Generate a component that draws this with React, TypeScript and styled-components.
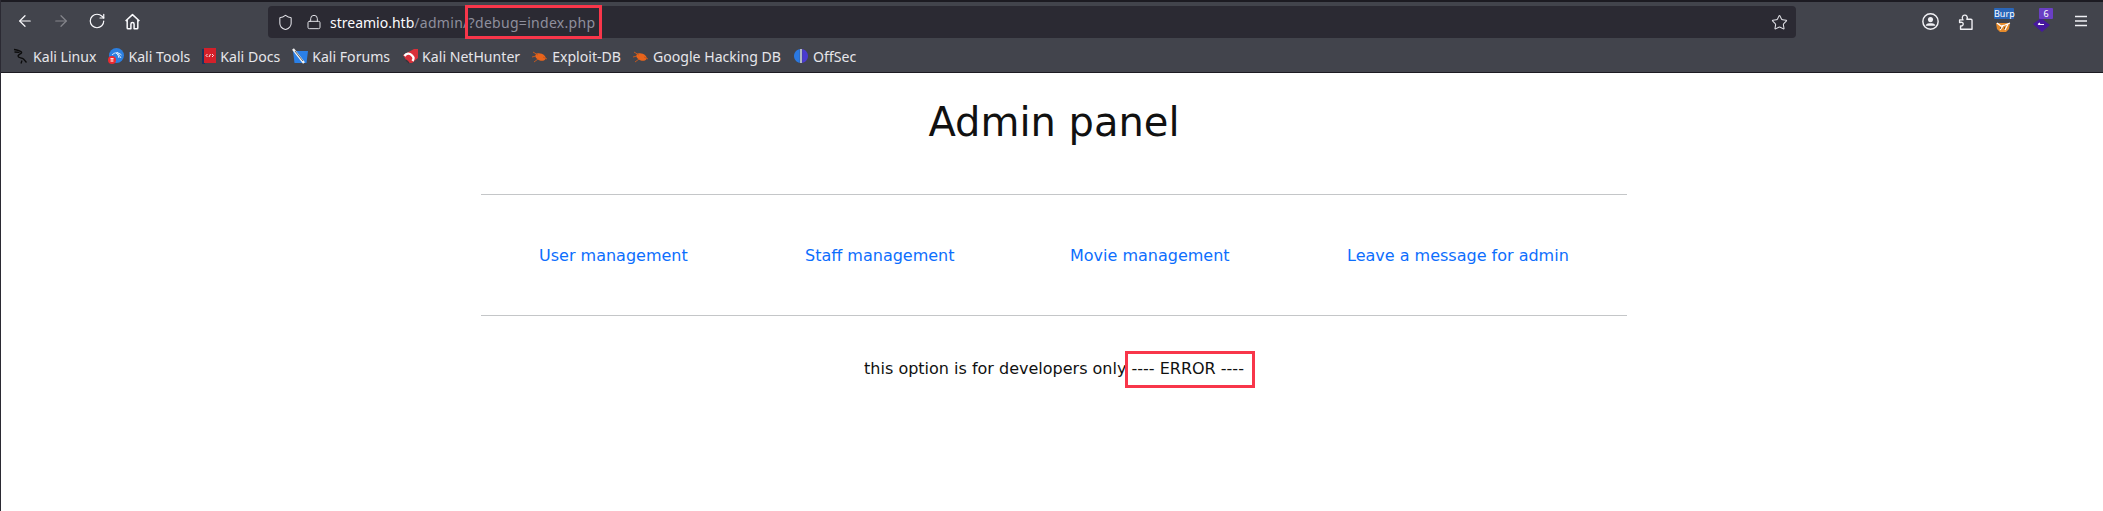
import React from 'react';
import styled, { createGlobalStyle } from 'styled-components';
import { ArrowLeft, ArrowRight, RotateCw, Shield, Lock, Star } from 'lucide-react';

const GlobalStyle = createGlobalStyle`
  html, body {
    margin: 0;
    padding: 0;
    background: #ffffff;
    overflow: hidden;
  }
`;

const Window = styled.div`
  width: 2103px;
  height: 511px;
  display: flex;
  flex-direction: column;
  border-left: 1px solid #2b2a33;
  box-sizing: border-box;
`;

const TopStrip = styled.div`
  height: 2px;
  background: #1c1b22;
  flex: none;
`;

const NavBar = styled.div`
  height: 38px;
  background: #42444c;
  display: flex;
  align-items: center;
  padding-left: 15px;
  flex: none;
`;

const NavButtons = styled.div`
  display: flex;
  align-items: center;
  gap: 18px;
  width: 252px;
  color: #fbfbfe;
`;

const UrlBar = styled.div`
  position: relative;
  width: 1528px;
  height: 32px;
  background: #2b2a33;
  border-radius: 4px;
  display: flex;
  align-items: center;
  padding: 0 8px 0 9px;
  box-sizing: border-box;
  color: #e0e0e6;
  margin-top: 2px;
`;

const LockSlot = styled.div`
  display: flex;
  margin-left: 12px;
`;

const UrlText = styled.span`
  font-family: 'Noto Sans', sans-serif;
  font-size: 14px;
  color: #fbfbfe;
  margin-left: 8px;
  white-space: nowrap;
`;

const UrlMuted = styled.span`
  color: #8f8f9d;
  letter-spacing: 0.3px;
`;

const StarSlot = styled.div`
  margin-left: auto;
  display: flex;
  color: #e0e0e6;
`;

const Highlight = styled.div<{ $l: number; $t: number; $w: number; $h: number }>`
  position: absolute;
  left: ${(p) => p.$l}px;
  top: ${(p) => p.$t}px;
  width: ${(p) => p.$w}px;
  height: ${(p) => p.$h}px;
  border: 3px solid #f8364a;
  box-sizing: border-box;
`;

const RightTools = styled.div`
  display: flex;
  align-items: center;
  margin-left: 126px;
  gap: 19px;
  color: #f0f0f4;
`;

const Badge = styled.div`
  position: relative;
  width: 20px;
  height: 24px;
`;

const BadgeLabel = styled.div<{ $bg: string; $w: number }>`
  position: absolute;
  top: -1px;
  right: 0;
  width: ${(p) => p.$w}px;
  height: 11px;
  background: ${(p) => p.$bg};
  border-radius: 1px;
  color: #ffffff;
  font-family: 'Noto Sans', sans-serif;
  font-size: 9px;
  line-height: 11px;
  text-align: center;
  white-space: nowrap;
`;

const BookmarksBar = styled.div`
  height: 33px;
  background: #42444c;
  border-bottom: 1px solid #1c1b22;
  display: flex;
  align-items: center;
  padding-left: 12px;
  gap: 12px;
  flex: none;
  box-sizing: border-box;
`;

const Bookmark = styled.div`
  display: flex;
  align-items: center;
  gap: 4px;
  color: #e6e6ea;
  font-family: 'Noto Sans', sans-serif;
  font-size: 14.1px;
  white-space: nowrap;
`;

const Page = styled.main`
  flex: 1;
  background: #ffffff;
  display: flex;
  flex-direction: column;
  align-items: center;
  padding-left: 4px;
  font-family: 'DejaVu Sans', sans-serif;
  color: #212529;
`;

const Title = styled.h1`
  margin: 25px 0 0;
  font-size: 40px;
  font-weight: 400;
  line-height: 48px;
  color: #111111;
`;

const Rule = styled.hr<{ $top: number }>`
  width: 1146px;
  margin: ${(p) => p.$top}px 0 0;
  border: 0;
  border-top: 1px solid #c4c6c8;
`;

const LinkRow = styled.nav`
  width: 1146px;
  display: flex;
  margin-top: 49px;
`;

const NavLink = styled.a<{ $w: number }>`
  width: ${(p) => p.$w}px;
  padding-left: 58px;
  box-sizing: border-box;
  color: #0d6efd;
  font-size: 16px;
  line-height: 24px;
  text-decoration: none;
  white-space: nowrap;
`;

const Message = styled.div`
  position: relative;
  margin-top: 41px;
  font-size: 16px;
  line-height: 24px;
  color: #111111;
  white-space: nowrap;
`;

const navIcon = { size: 18, strokeWidth: 1.6 };

function HomeIcon() {
  return (
    <svg width="17" height="17" viewBox="0 0 16 16" fill="none" stroke="currentColor" strokeWidth="1.4" strokeLinejoin="round">
      <path d="M1.5 7.6L8 1.5l6.5 6.1M3 6.4V14a.8.8 0 0 0 .8.8h2.7v-4.3a1.5 1.5 0 0 1 3 0v4.3h2.7a.8.8 0 0 0 .8-.8V6.4" />
    </svg>
  );
}

function AccountIcon() {
  return (
    <svg width="17" height="17" viewBox="0 0 16 16" fill="none">
      <circle cx="8" cy="8" r="7.2" stroke="#f0f0f4" strokeWidth="1.4" />
      <circle cx="8" cy="6.2" r="2.4" fill="#f0f0f4" />
      <path d="M3.6 11.2c1-1.1 2.6-1.5 4.4-1.5s3.4.4 4.4 1.5v.8H3.6z" fill="#f0f0f4" />
    </svg>
  );
}

function ExtensionIcon() {
  return (
    <svg width="17" height="17" viewBox="0 0 16 16" fill="none" stroke="#f0f0f4" strokeWidth="1.3" strokeLinejoin="round">
      <path d="M1.5 6.5h3.2c-.9-1-1-2-.4-3.2.6-1.4 3-1.8 4-.4.6.9.6 2 0 3h3.900a1 1 0 0 1 1 1v8.400H2.400v-3.200c1.300.3 2.500-.3 2.500-1.800S3 8.300 1.500 9z" />
    </svg>
  );
}

function MenuIcon() {
  return (
    <svg width="18" height="18" viewBox="0 0 18 18" stroke="#f0f0f4" strokeWidth="1.4">
      <path d="M3 4.500h12M3 9h12M3 13.500h12" />
    </svg>
  );
}

function Favicon({ name }: { name: string }) {
  switch (name) {
    case 'linux':
      return (
        <svg width="16" height="16" viewBox="0 0 16 16" fill="none" stroke="#0c0c0c" strokeWidth="1.3">
          <path d="M1 1.500c3 .5 6 1 7.500 2.500 1 1.500-3 2-3.500 4 0 2 3.500 1.500 5.500 3l3 3.500" />
          <path d="M1.500 4c2 0 3.500 0 5 .5M9 12.500l-1 3" />
        </svg>
      );
    case 'tools':
      return (
        <svg width="16" height="16" viewBox="0 0 16 16">
          <circle cx="8.500" cy="7.500" r="7.500" fill="#2b7fe0" />
          <path d="M4 7c3-3 6-3 9.500 0M8 5l2 2 1 3M9 4l4 6" stroke="#e8f0fc" fill="none" strokeWidth="0.9" />
          <circle cx="4" cy="12" r="4" fill="#ec2a30" />
          <path d="M2.500 10.500h3M3.200 10.500v3.500M4.800 10.500v3.500" stroke="#ffffff" strokeWidth="0.8" />
        </svg>
      );
    case 'docs':
      return (
        <svg width="14" height="16" viewBox="0 0 14 16">
          <rect x="0" y="1" width="3" height="15" fill="#17345f" />
          <rect x="2" y="0" width="12" height="15" fill="#d3202a" />
          <path d="M5.500 6l-1.500 1.500 1.500 1.500M10 6l1.500 1.500L10 9M7 9l1.500-3" stroke="#ffffff" strokeWidth="0.9" fill="none" />
        </svg>
      );
    case 'forums':
      return (
        <svg width="16" height="16" viewBox="0 0 16 16">
          <path d="M1 3h15l-1.500 12H2.500z" fill="#2a80e8" />
          <path d="M1 1l11 14" stroke="#f4f4f4" strokeWidth="2.400" />
          <path d="M3 3l8 10" stroke="#3a3a3a" strokeWidth="0.8" />
        </svg>
      );
    case 'nethunter':
      return (
        <svg width="16" height="16" viewBox="0 0 16 16">
          <path d="M1 7L12 1h4v9l-6 5H6z" fill="#d9303a" />
          <path d="M2.500 8c2-3 5-3 7-1s3 3 1 6" stroke="#ffffff" strokeWidth="2.400" fill="none" />
          <path d="M4 12l3 3" stroke="#33353b" strokeWidth="1.500" />
        </svg>
      );
    case 'bug':
      return (
        <svg width="16" height="13" viewBox="0 0 16 13">
          <ellipse cx="8.500" cy="7" rx="5.500" ry="3.500" fill="#e8641c" transform="rotate(22 8.500 7)" />
          <path d="M1 2l5 3M2 12l4-3M15 9l-4-2M4 6L0 7" stroke="#c4581e" strokeWidth="1" />
        </svg>
      );
    default:
      return (
        <svg width="16" height="16" viewBox="0 0 16 16">
          <path d="M6.800 1C3 2 1 5 1 8s2 6 5.800 7z" fill="#2b78e0" />
          <path d="M9.200 1C13 2 15 5 15 8s-2 6-5.800 7z" fill="#4a3ad0" />
          <rect x="7.300" y="1" width="1.400" height="14" fill="#dfe8f8" />
        </svg>
      );
  }
}

const bookmarks = [
  { label: 'Kali Linux', icon: 'linux' },
  { label: 'Kali Tools', icon: 'tools' },
  { label: 'Kali Docs', icon: 'docs' },
  { label: 'Kali Forums', icon: 'forums' },
  { label: 'Kali NetHunter', icon: 'nethunter' },
  { label: 'Exploit-DB', icon: 'bug' },
  { label: 'Google Hacking DB', icon: 'bug' },
  { label: 'OffSec', icon: 'offsec' },
];

const links = [
  { label: 'User management', w: 266 },
  { label: 'Staff management', w: 265 },
  { label: 'Movie management', w: 277 },
  { label: 'Leave a message for admin', w: 338 },
];

export default function App() {
  return (
    <>
      <GlobalStyle />
      <Window>
        <TopStrip />
        <NavBar>
          <NavButtons>
            <ArrowLeft {...navIcon} />
            <ArrowRight {...navIcon} color="#85868c" />
            <RotateCw {...navIcon} />
            <HomeIcon />
          </NavButtons>
          <UrlBar>
            <Shield size={17} strokeWidth={1.5} />
            <LockSlot>
              <Lock size={16} strokeWidth={1.5} />
            </LockSlot>
            <UrlText>
              streamio.htb<UrlMuted>/admin/?debug=index.php</UrlMuted>
            </UrlText>
            <StarSlot>
              <Star size={17} strokeWidth={1.5} />
            </StarSlot>
            <Highlight $l={197} $t={-1} $w={137} $h={34} />
          </UrlBar>
          <RightTools>
            <AccountIcon />
            <ExtensionIcon />
            <Badge>
              <svg width="20" height="24" viewBox="0 0 20 24">
                <path d="M2 14h14l-1 6-3 3H6l-3-3z" fill="#e58a2a" />
                <path d="M3 14l4 3 4-1 5-2M9 17l-3 4M14 15l-3 6" stroke="#ffffff" strokeWidth="1.200" fill="none" />
                <path d="M6 19h1M10 19h1" stroke="#222222" strokeWidth="1" />
              </svg>
              <BadgeLabel $bg="#2a66b8" $w={20}>Burp</BadgeLabel>
            </Badge>
            <Badge>
              <svg width="20" height="24" viewBox="0 0 20 24">
                <path d="M0 15l8-6 9 7-8 7z" fill="#46189e" />
                <path d="M5 15.500h6M5 15.500l2-1.500" stroke="#ffffff" strokeWidth="1.200" fill="none" />
              </svg>
              <BadgeLabel $bg="#6a3fc4" $w={14}>6</BadgeLabel>
            </Badge>
            <MenuIcon />
          </RightTools>
        </NavBar>
        <BookmarksBar>
          {bookmarks.map((b) => (
            <Bookmark key={b.label}>
              <Favicon name={b.icon} />
              {b.label}
            </Bookmark>
          ))}
        </BookmarksBar>
        <Page>
          <Title>Admin panel</Title>
          <Rule $top={48} />
          <LinkRow>
            {links.map((l) => (
              <NavLink key={l.label} href="#" $w={l.w}>
                {l.label}
              </NavLink>
            ))}
          </LinkRow>
          <Rule $top={47} />
          <Message>
            this option is for developers only ---- ERROR ----
            <Highlight $l={261} $t={-6} $w={130} $h={37} />
          </Message>
        </Page>
      </Window>
    </>
  );
}
